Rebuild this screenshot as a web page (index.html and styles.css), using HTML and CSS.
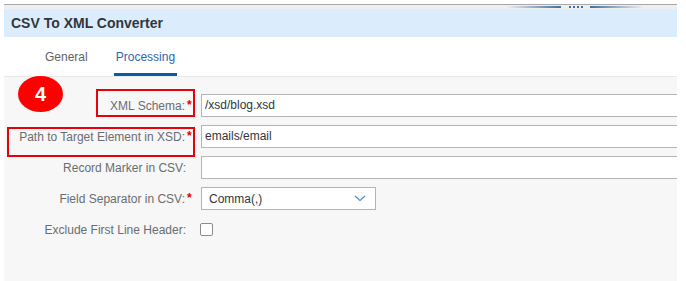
FILE: index.html
```html
<!DOCTYPE html>
<html>
<head>
<meta charset="utf-8">
<link rel="stylesheet" href="styles.css">
</head>
<body>
<div class="panel">
  <div class="splitter">
    <div class="handle">
      <span class="line line-left"></span>
      <span class="dots"><i></i><i></i><i></i><i></i></span>
      <span class="line line-right"></span>
    </div>
  </div>
  <div class="header">CSV To XML Converter</div>
  <div class="tabs">
    <div class="tab">General</div>
    <div class="tab tab-active">Processing</div>
  </div>
  <div class="body">
    <div class="form">
      <div class="label">XML Schema:</div><div class="req">*</div>
      <div class="input">/xsd/blog.xsd</div>

      <div class="label">Path to Target Element in XSD:</div><div class="req">*</div>
      <div class="input">emails/email</div>

      <div class="label label-plain">Record Marker in CSV:</div><div class="req"></div>
      <div class="input"></div>

      <div class="label">Field Separator in CSV:</div><div class="req">*</div>
      <div class="select"><span>Comma(,)</span>
        <svg class="chev" width="12" height="7" viewBox="0 0 12 7"><polyline points="1,1 6,5.5 11,1" fill="none" stroke="#5b8fd0" stroke-width="1.3"/></svg>
      </div>

      <div class="label label-plain">Exclude First Line Header:</div><div class="req"></div>
      <div class="checkcell"><span class="checkbox"></span></div>
    </div>
  </div>
  <div class="badge">4</div>
  <div class="mark mark-1"></div>
  <div class="mark mark-2"></div>
</div>
</body>
</html>
```
FILE: styles.css
```css
html, body {
  margin: 0;
  padding: 0;
  background: #ffffff;
}
body {
  font-family: "Liberation Sans", Arial, sans-serif;
  font-size: 12px;
  color: #32363a;
}
.panel {
  position: relative;
  margin: 4px 0 0 4px;
  width: 673px;
  height: 276px;
  border-top: 1px solid #a8a8a8;
  overflow: hidden;
  background: #f7f7f7;
}
.splitter {
  height: 4px;
  background: #efefef;
}
.handle {
  display: flex;
  align-items: center;
  height: 4px;
  padding-left: 502px;
}
.line {
  display: block;
  height: 2px;
  width: 55px;
}
.line-left {
  background: linear-gradient(to right, rgba(60,110,170,0), #3f6fa6);
}
.line-right {
  width: 54px;
  background: linear-gradient(to right, #3f6fa6, rgba(60,110,170,0));
}
.dots {
  display: flex;
  gap: 2px;
  margin: 0 7px 0 8px;
}
.dots i {
  display: block;
  width: 2px;
  height: 2px;
  background: #3c6fb0;
}
.header {
  height: 28px;
  line-height: 28px;
  background: #dbedfd;
  padding-left: 7px;
  font-weight: bold;
  font-size: 14px;
  color: #32363a;
}
.tabs {
  display: flex;
  gap: 24px;
  padding-left: 39px;
  height: 39px;
  background: #ffffff;
  border-bottom: 1px solid #e8e8e8;
}
.tab {
  padding: 12px 2px 8px;
  line-height: 16px;
  border-bottom: 3px solid transparent;
  color: #5f6266;
  font-size: 12px;
}
.tab-active {
  color: #2d68ad;
  border-bottom-color: #0a5aa8;
}
.body {
  height: 203px;
  background: #f7f7f7;
  padding-top: 17px;
  box-sizing: border-box;
}
.form {
  display: grid;
  grid-template-columns: 182px 8px 500px;
  column-gap: 0;
  row-gap: 8px;
  grid-auto-rows: 23px;
  align-items: center;
}
.label {
  text-align: right;
  color: #6a6d70;
  white-space: nowrap;
  padding-right: 1px;
  margin-top: 1px;
}
.label-plain {
  padding-right: 0;
}
.req {
  color: #e00000;
  font-weight: bold;
  font-size: 12px;
  padding-left: 1px;
  align-self: center;
  margin-top: -1px;
}
.input {
  margin-left: 7px;
  height: 23px;
  box-sizing: border-box;
  border: 1px solid #b4b4b4;
  background: #ffffff;
  padding-left: 3px;
  line-height: 21px;
  color: #32363a;
}
.select {
  margin-left: 7px;
  width: 175px;
  height: 23px;
  box-sizing: border-box;
  border: 1px solid #b4b4b4;
  background: #ffffff;
  display: flex;
  align-items: center;
  justify-content: space-between;
  padding: 0 9px 0 7px;
  color: #32363a;
}
.chev {
  display: block;
}
.checkcell {
  margin-left: 6px;
  display: flex;
  align-items: center;
}
.checkbox {
  display: block;
  width: 13px;
  height: 13px;
  box-sizing: border-box;
  border: 1px solid #8a8d90;
  border-radius: 2px;
  background: #ffffff;
}
.badge {
  position: absolute;
  left: 14px;
  top: 71px;
  width: 45px;
  height: 36px;
  border-radius: 50%;
  background: #ff0000;
  color: #ffffff;
  font-weight: bold;
  font-size: 20px;
  line-height: 36px;
  text-align: center;
}
.mark {
  position: absolute;
  border: 2px solid #e8000b;
  box-sizing: border-box;
}
.mark-1 {
  left: 92px;
  top: 84px;
  width: 99px;
  height: 28px;
}
.mark-2 {
  left: 3px;
  top: 122px;
  width: 188px;
  height: 30px;
}
```
